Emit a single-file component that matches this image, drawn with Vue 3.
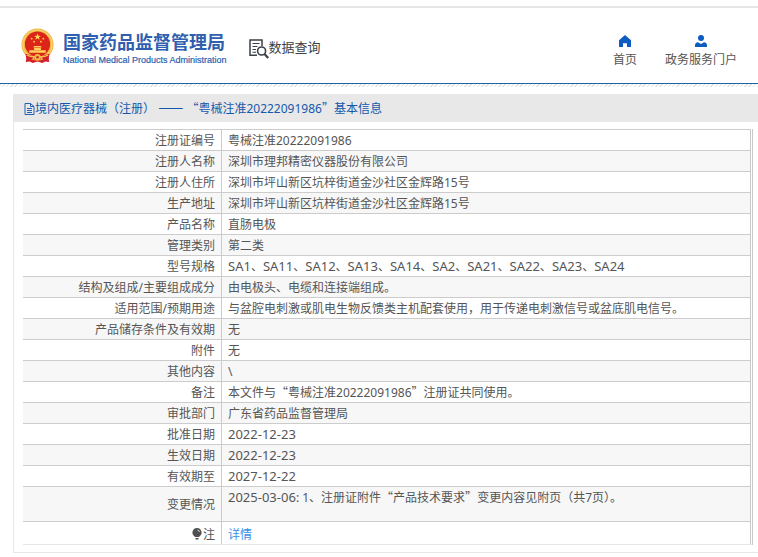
<script setup>
const rows = [
  { label: '注册证编号', value: '粤械注准20222091986' },
  { label: '注册人名称', value: '深圳市理邦精密仪器股份有限公司' },
  { label: '注册人住所', value: '深圳市坪山新区坑梓街道金沙社区金辉路15号' },
  { label: '生产地址', value: '深圳市坪山新区坑梓街道金沙社区金辉路15号' },
  { label: '产品名称', value: '直肠电极' },
  { label: '管理类别', value: '第二类' },
  { label: '型号规格', value: 'SA1、SA11、SA12、SA13、SA14、SA2、SA21、SA22、SA23、SA24' },
  { label: '结构及组成/主要组成成分', value: '由电极头、电缆和连接端组成。' },
  { label: '适用范围/预期用途', value: '与盆腔电刺激或肌电生物反馈类主机配套使用，用于传递电刺激信号或盆底肌电信号。' },
  { label: '产品储存条件及有效期', value: '无' },
  { label: '附件', value: '无' },
  { label: '其他内容', value: '\\' },
  { label: '备注', value: '本文件与“粤械注准20222091986”注册证共同使用。' },
  { label: '审批部门', value: '广东省药品监督管理局' },
  { label: '批准日期', value: '2022-12-23' },
  { label: '生效日期', value: '2022-12-23' },
  { label: '有效期至', value: '2027-12-22' },
  { label: '变更情况', value: '2025-03-06: 1、注册证附件“产品技术要求”变更内容见附页（共7页）。', tall: true },
]

const title = '境内医疗器械（注册） —— “粤械注准20222091986”基本信息'

// Curly quotes and dashes take the CJK face; dates and model codes are set a step larger.
const kind = (t) => {
  if (/^[“”]/.test(t)) return 'wide'
  if (/^—/.test(t)) return 'dash'
  if (/^(SA\d|\d{4}-)/.test(t)) return 'code'
  return ''
}

const parts = (text) =>
  text
    .split(/([“”]|—+|SA\d+|\d{4}-\d\d-\d\d)/)
    .filter(Boolean)
    .map((t) => ({ text: t, kind: kind(t) }))
</script>

<template>
  <div class="page">
    <header class="header">
      <div class="brand">
        <svg class="emblem" viewBox="0 0 34 36" aria-hidden="true">
          <path d="M6 26 L5 34.500 L9 34 L12 35.500 L17 34 L22 35.500 L25 34 L29 34.500 L28 26Z" fill="#d3202a" />
          <circle cx="17" cy="16.500" r="16.500" fill="#f0b944" />
          <circle cx="17" cy="16.500" r="15" fill="none" stroke="#f9d983" stroke-width="1" />
          <circle cx="17" cy="16" r="13" fill="#dd2418" />
          <path d="M17 5.200l.9 2.300 2.500.1-1.950 1.500.7 2.400L17 10.100l-2.150 1.400.7-2.400-1.950-1.500 2.500-.1z" fill="#ffd84e" />
          <g fill="#ffd84e">
            <circle cx="11" cy="10.500" r=".9" /><circle cx="23" cy="10.500" r=".9" />
            <circle cx="13.500" cy="13.500" r=".9" /><circle cx="20.500" cy="13.500" r=".9" />
          </g>
          <path d="M12.500 19.500l1.200-1.500h6.600l1.200 1.500zM13.500 20h7v2h-7zM8.500 22.300h17v2.700h-17z" fill="#ffd05a" />
          <path d="M4.500 26q12.500 4.500 25 0l-1 4.500q-11.500 2.500-23 0z" fill="#d3202a" />
          <path d="M6 27.500q5 2 8 1.500l-2 3M28 27.500q-5 2-8 1.500l2 3" fill="none" stroke="#f4c04a" stroke-width="1.400" />
          <circle cx="17" cy="29.500" r="3.200" fill="#f0b944" />
          <circle cx="17" cy="29.500" r="1.300" fill="#c92a20" />
        </svg>
        <div class="names">
          <div class="name-zh">国家药品监督管理局</div>
          <div class="name-en">National Medical Products Administration</div>
        </div>
      </div>
      <div class="section">
        <svg class="section-icon" viewBox="0 0 20 20" fill="none" stroke="#3b3f46" aria-hidden="true">
          <path d="M8 16.200H1V1h12v6" stroke-width="1.500" />
          <path d="M3.500 4.500h7M3.500 7.500h5M3.500 10.500h3.500M3.500 13.300h3.500" stroke-width="1.100" />
          <circle cx="12.600" cy="12" r="4" stroke-width="1.600" />
          <path d="M15.500 15l3.700 4" stroke-width="2.200" />
        </svg>
        <span>数据查询</span>
      </div>
      <nav class="nav">
        <a class="nav-link" href="#">
          <svg class="nav-icon" viewBox="0 0 12 12" aria-hidden="true">
            <path d="M6 0L0 5.200V12h4V8.300h4V12h4V5.200z" fill="#0d5cc0" />
          </svg>
          <span>首页</span>
        </a>
        <a class="nav-link" href="#">
          <svg class="nav-icon" viewBox="0 0 12 12" aria-hidden="true">
            <circle cx="6" cy="3" r="3" fill="#0d5cc0" />
            <path d="M0 12V10.500Q0 7.500 3 7.200L6 9l3-1.800q3 .3 3 3.300V12z" fill="#0d5cc0" />
          </svg>
          <span>政务服务门户</span>
        </a>
      </nav>
    </header>

    <main class="panel">
      <h1 class="panel-title">
        <svg class="doc-icon" viewBox="0 0 11 12" fill="none" stroke="#2260b0" aria-hidden="true">
          <path d="M1 .5h5.500l3.500 3v8H1zM6.500.5v3H10M3 5.500h5M3 7.500h5M3 9.500h5" />
        </svg>
        <span><span v-for="(p, i) in parts(title)" :key="i" :class="p.kind">{{ p.text }}</span></span>
      </h1>
      <div class="table-frame">
        <table class="info">
          <tbody>
            <tr v-for="row in rows" :key="row.label" :class="{ tall: row.tall }">
              <th scope="row">{{ row.label }}</th>
              <td><span v-for="(p, i) in parts(row.value)" :key="i" :class="p.kind">{{ p.text }}</span></td>
            </tr>
            <tr class="note">
              <th scope="row">
                <svg class="bulb" viewBox="0 0 10 12" aria-hidden="true">
                  <path d="M5 0a4.500 4.500 0 0 1 3 7.900L6.800 9H3.200L2 7.900A4.500 4.500 0 0 1 5 0z" fill="#505050" />
                  <path d="M3.500 10h3v1.500h-3z" fill="#505050" />
                  <path d="M5.500 2q1.700.3 2 2" fill="none" stroke="#fff" stroke-width=".8" />
                </svg>注
              </th>
              <td><a class="detail" href="#">详情</a></td>
            </tr>
          </tbody>
        </table>
      </div>
    </main>
  </div>
</template>

<style>
body {
  background: #fff;
}
</style>

<style scoped>
.page {
  padding-top: 6px;
  font-family: "Noto Sans", "Noto Sans CJK SC", sans-serif;
  font-size: 12px;
  line-height: 20px;
  color: #555;
}

.header {
  position: relative;
  display: flex;
  align-items: flex-start;
  height: 75px;
  padding: 0 21px;
  border-top: 2px solid #e6e6e6;
  border-bottom: 1px solid #1a62a5;
}

.header::after {
  content: "";
  position: absolute;
  top: 100%;
  left: 0;
  right: 0;
  height: 3px;
  margin-top: 1px;
  background: repeating-linear-gradient(135deg, #e2e2e2 0 1px, #fff 1px 3px);
}

.brand {
  display: flex;
  gap: 9px;
  padding-top: 20px;
}

.emblem {
  width: 33px;
  height: 36px;
}

.names {
  color: #2f5fae;
  white-space: nowrap;
}

.name-zh {
  font-family: "Noto Sans CJK SC", sans-serif;
  font-size: 18px;
  font-weight: 700;
  line-height: 26px;
}

.name-en {
  font-family: "Liberation Sans", sans-serif;
  font-size: 9px;
  line-height: 12px;
  -webkit-text-stroke: 0.2px #2f5fae;
}

.section {
  display: flex;
  align-items: flex-start;
  padding: 31px 0 0 22px;
  font-size: 13px;
  line-height: 16px;
  color: #3b3f46;
  white-space: nowrap;
}

.section-icon {
  width: 20px;
  height: 20px;
}

.nav {
  display: flex;
  gap: 28px;
  margin-left: auto;
  padding-top: 27px;
}

.nav-link {
  display: flex;
  flex-direction: column;
  align-items: center;
  gap: 3px;
  color: #555;
  text-decoration: none;
  white-space: nowrap;
}

.nav-icon {
  width: 12px;
  height: 12px;
}

.panel {
  margin: 10px 0 0 13px;
  padding-bottom: 7px;
  border-left: 1px solid #e8e8e8;
  border-bottom: 1px solid #e8e8e8;
}

.panel-title {
  display: flex;
  align-items: center;
  height: 26px;
  margin: 0 0 7px;
  padding: 2px 0 0 10px;
  background: #e8e8e8;
  font-size: 12px;
  font-weight: 400;
  color: #1558ab;
}

.doc-icon {
  width: 11px;
  height: 12px;
}

.wide,
.dash {
  font-family: "Noto Sans CJK SC", sans-serif;
  line-height: 1;
}

.dash {
  font-size: 15px;
}

.code {
  font-size: 13px;
  line-height: 1;
}

.table-frame {
  margin: 0 5px 0 9px;
  border-right: 3px double #c8c8cc;
  border-bottom: 1px solid #e6e6e6;
}

.info {
  width: 100%;
  border-collapse: separate;
  border-spacing: 0;
  line-height: 18px;
}

.info th,
.info td {
  height: 18px;
  padding: 2px 6px 0;
  border-top: 1px solid #ccc;
}

.info th {
  width: 186px;
  border-right: 1px solid #ccc;
  font-weight: 400;
  text-align: right;
}

.info tr:nth-child(even) {
  background: #f7f7f7;
}

.info .tall th,
.info .tall td {
  height: 32px;
}

.info .tall td {
  vertical-align: top;
}

.info .note th,
.info .note td {
  height: 19px;
  padding-top: 3px;
}

.bulb {
  width: 10px;
  height: 12px;
  margin-right: 1px;
  vertical-align: -1px;
}

.detail {
  color: #3a8ee6;
  text-decoration: none;
}
</style>
